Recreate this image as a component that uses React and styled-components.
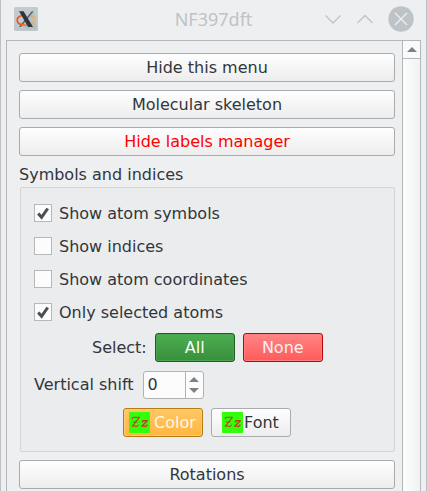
import React from "react";
import styled, { createGlobalStyle, css } from "styled-components";

const GlobalStyle = createGlobalStyle`
  * { box-sizing: border-box; }
  body { margin: 0; overflow: hidden; background: #eeeff1; }
`;

const Window = styled.div`
  display: flex;
  flex-direction: column;
  width: 427px;
  height: 491px;
  overflow: hidden;
  background: #eeeff1;
  border: solid #bdc1c6;
  border-width: 0 1px;
  color: #31363b;
  font: 16px/20px "DejaVu Sans", sans-serif;
  white-space: nowrap;
`;

const TitleBar = styled.header`
  display: grid;
  grid-template-columns: 24px 1fr 90px;
  align-items: center;
  flex: none;
  height: 40px;
  padding: 0 12px 2px 13px;
`;

const Title = styled.h1`
  margin: 0;
  padding-left: 65px;
  text-align: center;
  color: #bdc3c7;
  font: 400 18px/24px "Noto Sans", sans-serif;
`;

const WindowControls = styled.div`
  display: flex;
  justify-content: space-between;
  align-items: center;
`;

const Frame = styled.main`
  display: flex;
  flex: 1;
  margin: 0 5px;
  border: solid #b4b7ba;
  border-width: 1px 1px 0;
  min-height: 0;
`;

const Content = styled.div`
  flex: 1;
  padding: 12px 7px 0 12px;
  overflow: hidden;
`;

const ScrollBar = styled.div`
  width: 18px;
  border-left: 1px solid #b4b7ba;
  background: linear-gradient(90deg, #fdfdfd, #f1f2f2);
`;

const ScrollUp = styled.div`
  display: flex;
  align-items: center;
  justify-content: center;
  height: 18px;
  border-bottom: 1px solid #b4b7ba;
  background: #fafafa;
`;

const tones = {
  plain: css`
    color: #31363b;
    border-color: #a9abad;
    background: linear-gradient(#fefefe, #ededed);
  `,
  green: css`
    color: #fcfcfc;
    border-color: #1b5e20;
    background: linear-gradient(#4caf50, #388e3c);
    box-shadow: inset 0 0 0 1px #4ba44e;
  `,
  red: css`
    color: #fcf0f0;
    border-color: #b3070c;
    background: linear-gradient(#ff8585, #ff5a5a);
    box-shadow: inset 0 0 0 1px #ff8080;
  `,
  amber: css`
    color: #fff7e8;
    border-color: #b87b10;
    background: linear-gradient(#ffc766, #ffb640);
    box-shadow: inset 0 0 0 1px #ffcb75;
  `,
};

const Button = styled.button`
  display: flex;
  align-items: center;
  justify-content: ${(p) => p.$align || "center"};
  width: ${(p) => p.$width || "100%"};
  height: 29px;
  padding: ${(p) => p.$padding || "0"};
  border: 1px solid;
  border-radius: 3px;
  font: inherit;
  ${(p) => tones[p.$tone || "plain"]}
  ${(p) => p.$alert && "color: #ff0000;"}
`;

const MenuStack = styled.nav`
  display: grid;
  gap: 8px;
`;

const SectionTitle = styled.h2`
  margin: 9px 0 2px;
  font: inherit;
`;

const Group = styled.section`
  height: 265px;
  margin: 0 0 8px 1px;
  padding: 15px 13px 0;
  border: 1px solid #d2d4d6;
  border-radius: 2px;
  background: #ebecee;
`;

const CheckRow = styled.label`
  display: flex;
  align-items: center;
  gap: 7px;
  height: 20px;
  margin-bottom: 13px;
`;

const CheckText = styled.span`
  padding-top: 2px;
`;

const CheckList = styled.div`
  height: 130px;
`;

const Box = styled.span`
  display: flex;
  width: 18px;
  height: 18px;
  border: 1px solid #b6b8b9;
  background: #fcfcfc;
`;

const Row = styled.div`
  display: flex;
  align-items: center;
  gap: 8px;
  height: ${(p) => p.$height || 29}px;
  margin: 0 0 ${(p) => p.$after || 0}px ${(p) => p.$indent || 0}px;
`;

const SpinBox = styled.div`
  display: flex;
  width: 61px;
  height: 28px;
  margin-left: 1px;
  border: 1px solid #b0b2b4;
  border-radius: 3px;
  background: #fcfcfc;
`;

const SpinValue = styled.span`
  flex: 1;
  padding: 3px 0 0 4px;
`;

const SpinArrows = styled.span`
  display: flex;
  flex-direction: column;
  align-items: center;
  justify-content: center;
  gap: 6px;
  width: 18px;
  border-left: 1px solid #b0b2b4;
`;

const FontSwatch = styled.span`
  display: flex;
  flex: none;
  width: 21px;
  height: 21px;
  margin-right: ${(p) => p.$gap || 0}px;
  background: #33ff0a;
`;

const XLogo = () => (
  <svg width="24" height="24" viewBox="0 0 24 24">
    <defs>
      <linearGradient id="tile" x1="0" y1="0" x2="0" y2="1">
        <stop stopColor="#c2ccd1" />
        <stop offset="1" stopColor="#bfc6ca" />
      </linearGradient>
      <linearGradient id="ring">
        <stop stopColor="#f3470d" />
        <stop offset=".45" stopColor="#ee7135" />
        <stop offset="1" stopColor="#e9bd6a" />
      </linearGradient>
    </defs>
    <rect width="24" height="24" rx="1.5" fill="url(#tile)" />
    <path d="M8 19l5 3h9V10l-3-6z" fill="#a9b1b6" opacity=".4" />
    <path d="M17.8 4.3h1.8L6.8 20H5z" fill="#555a5d" />
    <path d="M8 8.6C4.6 9.6 3 11.6 3.2 13.7c.4 2.8 4.2 4.6 9.3 4.5 4.9-.1 8.7-2.3 8.7-5.1 0-1.9-1.5-3.3-4-4.2" fill="none" stroke="url(#ring)" strokeWidth="1.6" />
    <path d="M5 4.2h4.6L19 20h-4.8z" fill="#333638" />
  </svg>
);

const Chevron = ({ up }) => (
  <svg width="18" height="12" viewBox="0 0 18 12">
    <path d={up ? "M1.5 10L9 2.5l7.5 7.5" : "M1.5 2.5L9 10l7.5-7.5"} fill="none" stroke="#bdc3c7" strokeWidth="1.3" />
  </svg>
);

const CloseIcon = () => (
  <svg width="26" height="26" viewBox="0 0 26 26">
    <circle cx="13" cy="13" r="12.7" fill="#bdc3c7" />
    <path d="M7 7l12 12M19 7L7 19" stroke="#eff0f1" strokeWidth="1.3" />
  </svg>
);

const Arrow = ({ down }) => (
  <svg width="10" height="5" viewBox="0 0 10 5">
    <path d={down ? "M0 0h10L5 5z" : "M0 5h10L5 0z"} fill="#7e8183" />
  </svg>
);

const Tick = () => (
  <svg width="16" height="16" viewBox="0 0 16 16">
    <path d="M3.2 8.4l3.4 3.9 6.1-8.8" fill="none" stroke="#4b4e51" strokeWidth="3" />
  </svg>
);

const LettersIcon = () => (
  <svg width="21" height="21" viewBox="0 0 21 21" fill="none" stroke="#c83c24" strokeLinejoin="round">
    <path d="M3.2 7.2Q3.2 5.2 5.2 5.3L10.3 5.3L3.1 14.6" strokeWidth="1.1" />
    <path d="M3.8 10h4.7M3 14.3q2-1 3.4 0t3.3-1.6" strokeWidth="1.1" />
    <path d="M13.2 10.4l.7-1.6h4.4l-5.5 5.5q1.5-.9 2.6 0t3-1.7" strokeWidth="1.4" />
  </svg>
);

const checks = [
  ["Show atom symbols", true],
  ["Show indices", false],
  ["Show atom coordinates", false],
  ["Only selected atoms", true],
];

export default function App() {
  return (
    <>
      <GlobalStyle />
      <Window>
        <TitleBar>
          <XLogo />
          <Title>NF397dft</Title>
          <WindowControls>
            <Chevron />
            <Chevron up />
            <CloseIcon />
          </WindowControls>
        </TitleBar>
        <Frame>
          <Content>
            <MenuStack>
              <Button>Hide this menu</Button>
              <Button>Molecular skeleton</Button>
              <Button $alert>Hide labels manager</Button>
            </MenuStack>
            <SectionTitle>Symbols and indices</SectionTitle>
            <Group>
              <CheckList>
                {checks.map(([text, checked]) => (
                  <CheckRow key={text}>
                    <Box>{checked && <Tick />}</Box>
                    <CheckText>{text}</CheckText>
                  </CheckRow>
                ))}
              </CheckList>
              <Row $indent={58} $after={9}>
                Select:
                <Button $tone="green" $width="80px">All</Button>
                <Button $tone="red" $width="80px">None</Button>
              </Row>
              <Row $height={28} $after={9}>
                Vertical shift
                <SpinBox>
                  <SpinValue>0</SpinValue>
                  <SpinArrows>
                    <Arrow />
                    <Arrow down />
                  </SpinArrows>
                </SpinBox>
              </Row>
              <Row $indent={89}>
                <Button $tone="amber" $width="80px" $align="flex-start" $padding="0 0 0 5px">
                  <FontSwatch $gap={4}><LettersIcon /></FontSwatch>
                  Color
                </Button>
                <Button $width="80px" $align="flex-start" $padding="0 0 0 10px">
                  <FontSwatch $gap={1}><LettersIcon /></FontSwatch>
                  Font
                </Button>
              </Row>
            </Group>
            <Button>Rotations</Button>
          </Content>
          <ScrollBar>
            <ScrollUp><Arrow /></ScrollUp>
          </ScrollBar>
        </Frame>
      </Window>
    </>
  );
}
